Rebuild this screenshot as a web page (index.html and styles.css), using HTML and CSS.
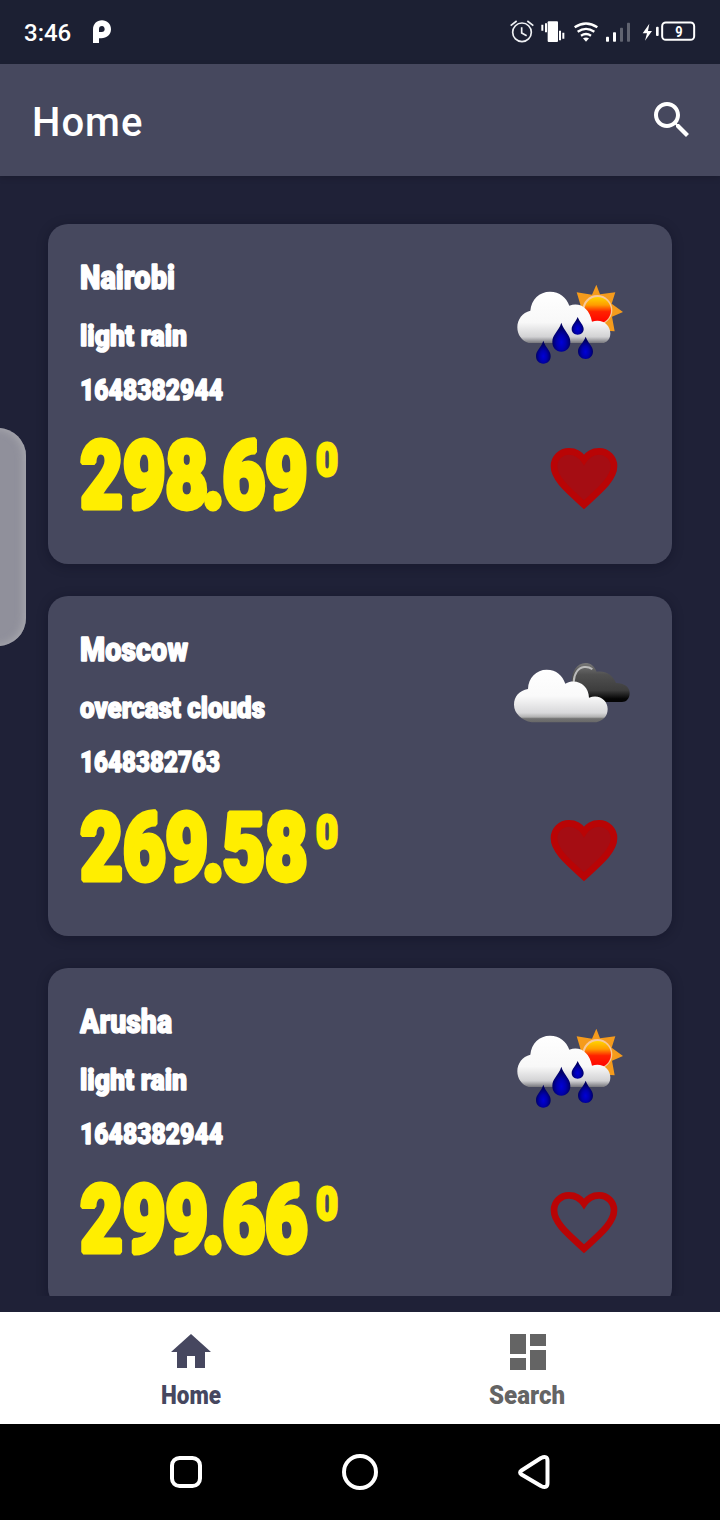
FILE: index.html
```html
<!DOCTYPE html>
<html lang="en">
<head>
<meta charset="utf-8">
<title>Home</title>
<link rel="stylesheet" href="styles.css">
</head>
<body>
<svg class="defs" aria-hidden="true">
  <defs>
    <linearGradient id="cloud" x1="0" y1="0" x2="0" y2="1">
      <stop offset="0" stop-color="#fff"/><stop offset=".5" stop-color="#fafafa"/>
      <stop offset=".82" stop-color="#d8d8da"/><stop offset=".9" stop-color="#b0b0b0"/><stop offset=".93" stop-color="#737373"/><stop offset="1" stop-color="#686868"/>
    </linearGradient>
    <linearGradient id="rainCloud" x1="0" y1="0" x2="0" y2="1">
      <stop offset="0" stop-color="#fff"/><stop offset=".6" stop-color="#f8f8f8"/>
      <stop offset=".88" stop-color="#d2d2d4"/><stop offset="1" stop-color="#77777d"/>
    </linearGradient>
    <linearGradient id="dark" x1="0" y1="0" x2="0" y2="1">
      <stop offset="0" stop-color="#777"/><stop offset=".3" stop-color="#505050"/>
      <stop offset=".7" stop-color="#3d3d3d"/><stop offset=".92" stop-color="#050505"/>
    </linearGradient>
    <linearGradient id="sun" x1="0" y1="0" x2="0" y2="1">
      <stop offset="0" stop-color="#ffd500"/><stop offset=".3" stop-color="#ff9c00"/><stop offset=".55" stop-color="#ff2200"/><stop offset="1" stop-color="#f00"/>
    </linearGradient>
    <radialGradient id="drop" cx=".5" cy=".68" r=".5">
      <stop offset="0" stop-color="#0000d8"/><stop offset=".5" stop-color="#0000ae"/><stop offset="1" stop-color="#000064"/>
    </radialGradient>
    <symbol id="rain" viewBox="42 -12 408 546">
      <path fill="#f59b1c" d="M319 74l11 29 46-6-11 34 34 25-33 14 8 44-60-4-38-60-16-53 46 7z"/>
      <circle cx="322" cy="150" r="45" fill="#f8c89a"/>
      <circle cx="323" cy="151" r="40" fill="url(#sun)"/>
      <path fill="url(#rainCloud)" d="M116 249C95 243 82 224 82 202c0-24 15-44 39-50 3-34 27-57 59-57 29 0 49 17 58 42 30-12 60 6 68 48 30-10 55 9 55 35 0 17-9 25-19 29z"/>
      <g fill="url(#drop)">
        <path d="M160 242c7 22 22 29 22 46 0 14-9 23-22 23s-22-9-22-23c0-17 15-24 22-46z"/>
        <path d="M214 188c9 28 27 34 27 58 0 17-11 29-27 29s-27-12-27-29c0-24 18-30 27-58z"/>
        <path d="M263 171c6 15 18 24 18 36 0 10-7 17-18 17s-18-7-18-17c0-12 12-21 18-36z"/>
        <path d="M287 230c7 20 22 28 22 44 0 14-9 23-22 23s-23-9-23-23c0-16 16-24 23-44z"/>
      </g>
    </symbol>
    <symbol id="clouds" viewBox="42 -36 408 546">
      <path fill="url(#dark)" d="M245 125c0-31 16-56 41-56 15 0 26 7 34 26 26-4 48 9 58 34 25 1 41 12 41 30 0 17-10 27-23 27h-95z"/>
      <path d="M251 126c1-26 14-43 31-45 15-2 20 3 25 7" fill="none" stroke="#bbb" stroke-width="6"/>
      <path fill="url(#cloud)" d="M125 247c-30-6-53-27-53-53 0-24 16-43 42-47 1-34 25-58 56-58 30 0 47 17 56 42 34-18 70 5 71 42 31-12 56 8 56 34 0 22-14 35-34 40z"/>
    </symbol>
  </defs>
</svg>
<div class="screen">
  <header class="status">
    <span class="clock">3:46</span>
    <svg class="p-logo" width="18" height="24" viewBox="279 62 54 72"><path fill-rule="evenodd" fill="#fff" d="M279 131V91c0-17 11-28 27-28 15 0 27 11 27 27s-13 27-29 27h-7v14zm18-33h8c6 0 9-3 9-8 0-6-3-10-8-10-6 0-9 4-9 9z"/></svg>
    <div class="indicators">
      <svg width="24" height="24" viewBox="60 61 72 72" fill="none" stroke="#eef0f3" stroke-width="5"><circle cx="96" cy="98" r="28"/><path d="M95 83v17l15 8M62 78l18-14M130 78l-18-14"/></svg>
      <svg width="26" height="24" viewBox="150 61 78 72" fill="#fff"><rect x="173" y="65" width="31" height="62" rx="3"/><path d="M165 71h6v27h-6zM154 75h6v18h-6zM207 93h6v29h-6zM217 99h6v18h-6z"/></svg>
      <svg class="wifi" width="26" height="24" viewBox="249 61 78 72" fill="none" stroke="#fff" stroke-width="7"><path d="M254 83q34-23 68 0M263 96q25-17 50 0M273 108q15-10 30 0"/><path d="M279 116q9-5 18 0l-9 10z" fill="#fff" stroke="none"/></svg>
      <svg class="signal" width="26" height="24" viewBox="345 61 78 72" fill="#fff"><rect x="348" y="111" width="9" height="15" rx="2"/><rect x="369" y="98" width="9" height="28" rx="2"/><rect x="390" y="84" width="9" height="42" rx="2" opacity=".3"/><rect x="411" y="69" width="9" height="57" rx="2" opacity=".3"/></svg>
      <svg class="battery" width="54" height="24" viewBox="456 61 162 72" fill="#fff"><path d="M478 72l-20 29h13l-6 22 21-29h-12z"/><rect x="498" y="81" width="8" height="28" rx="3"/><rect x="516.500" y="68.500" width="96" height="52" rx="11" fill="none" stroke="#fff" stroke-width="6"/><text x="567" y="111" text-anchor="middle" font-size="44" font-weight="700" textLength="22" lengthAdjust="spacingAndGlyphs">9</text></svg>
    </div>
  </header>
  <div class="appbar">
    <h1>Home</h1>
    <svg width="48" height="48" viewBox="0 0 24 24" fill="#fff"><path d="M15.500 14h-.79l-.28-.27C15.410 12.590 16 11.110 16 9.500 16 5.910 13.090 3 9.500 3S3 5.910 3 9.500 5.910 16 9.500 16c1.610 0 3.090-.59 4.230-1.570l.27.28v.79l5 4.990L20.490 19l-4.990-5zm-6 0C7.010 14 5 11.990 5 9.500S7.010 5 9.500 5 14 7.010 14 9.500 11.990 14 9.500 14z"/></svg>
  </div>
  <main class="list">
    <article class="card">
      <div class="info">
        <svg class="name" height="48"><text x="0" y="33" textLength="95" lengthAdjust="spacingAndGlyphs">Nairobi</text></svg>
        <svg class="line" height="54"><text x="0" y="41.500" textLength="107" lengthAdjust="spacingAndGlyphs">light rain</text></svg>
        <svg class="line" height="54"><text x="0" y="41.500" textLength="143" lengthAdjust="spacingAndGlyphs">1648382944</text></svg>
        <div class="temp">
          <svg class="value" height="120"><text transform="scale(.79 1)" x="0 54 108 154.500 180 234" y="96.500">298.69</text></svg>
          <svg class="deg" height="120"><text x="1" y="63.500" textLength="22" lengthAdjust="spacingAndGlyphs">0</text></svg>
        </div>
      </div>
      <div class="side">
        <svg width="136" height="182"><use href="#rain"/></svg>
        <svg class="heart filled" width="80" height="80" viewBox="0 0 24 24"><path d="M12 20C7.500 15.900 3 12.300 3 8.500 3 6 5 4 7.500 4c1.700 0 3.400.9 4.500 2.500C13.100 4.900 14.800 4 16.500 4 19 4 21 6 21 8.500c0 3.800-4.500 7.400-9 11.500z"/></svg>
      </div>
    </article>
    <article class="card">
      <div class="info">
        <svg class="name" height="48"><text x="0" y="33" textLength="108" lengthAdjust="spacingAndGlyphs">Moscow</text></svg>
        <svg class="line" height="54"><text x="0" y="41.500" textLength="185" lengthAdjust="spacingAndGlyphs">overcast clouds</text></svg>
        <svg class="line" height="54"><text x="0" y="41.500" textLength="140" lengthAdjust="spacingAndGlyphs">1648382763</text></svg>
        <div class="temp">
          <svg class="value" height="120"><text transform="scale(.79 1)" x="0 54 108 154.500 180 234" y="96.500">269.58</text></svg>
          <svg class="deg" height="120"><text x="1" y="63.500" textLength="22" lengthAdjust="spacingAndGlyphs">0</text></svg>
        </div>
      </div>
      <div class="side">
        <svg width="136" height="182"><use href="#clouds"/></svg>
        <svg class="heart filled" width="80" height="80" viewBox="0 0 24 24"><path d="M12 20C7.500 15.900 3 12.300 3 8.500 3 6 5 4 7.500 4c1.700 0 3.400.9 4.500 2.500C13.100 4.900 14.800 4 16.500 4 19 4 21 6 21 8.500c0 3.800-4.500 7.400-9 11.500z"/></svg>
      </div>
    </article>
    <article class="card">
      <div class="info">
        <svg class="name" height="48"><text x="0" y="33" textLength="92" lengthAdjust="spacingAndGlyphs">Arusha</text></svg>
        <svg class="line" height="54"><text x="0" y="41.500" textLength="107" lengthAdjust="spacingAndGlyphs">light rain</text></svg>
        <svg class="line" height="54"><text x="0" y="41.500" textLength="143" lengthAdjust="spacingAndGlyphs">1648382944</text></svg>
        <div class="temp">
          <svg class="value" height="120"><text transform="scale(.79 1)" x="0 54 108 154.500 180 234" y="96.500">299.66</text></svg>
          <svg class="deg" height="120"><text x="1" y="63.500" textLength="22" lengthAdjust="spacingAndGlyphs">0</text></svg>
        </div>
      </div>
      <div class="side">
        <svg width="136" height="182"><use href="#rain"/></svg>
        <svg class="heart" width="80" height="80" viewBox="0 0 24 24"><path d="M12 20C7.500 15.900 3 12.300 3 8.500 3 6 5 4 7.500 4c1.700 0 3.400.9 4.500 2.500C13.100 4.900 14.800 4 16.500 4 19 4 21 6 21 8.500c0 3.800-4.500 7.400-9 11.500z"/></svg>
      </div>
    </article>
  </main>
  <nav class="tabs">
    <div class="tab active">
      <svg width="48" height="48" viewBox="0 0 24 24"><path d="M10 20v-6h4v6h5v-8h3L12 3 2 12h3v8z"/></svg>
      <svg class="label" width="84" height="36"><text x="12" y="24" textLength="60" lengthAdjust="spacingAndGlyphs">Home</text></svg>
    </div>
    <div class="tab">
      <svg width="48" height="48" viewBox="0 0 24 24"><path d="M3 13h8V3H3v10zm0 8h8v-6H3v6zm10 0h8V11h-8v10zm0-18v6h8V3h-8z"/></svg>
      <svg class="label" width="84" height="36"><text x="3" y="24" textLength="76" lengthAdjust="spacingAndGlyphs">Search</text></svg>
    </div>
  </nav>
  <footer class="system">
    <svg width="36" height="36"><rect x="4" y="4" width="28" height="28" rx="7.500"/></svg>
    <svg width="36" height="36"><circle cx="18" cy="18" r="16"/></svg>
    <svg width="36" height="36"><path d="M5.500 16.500L25 4Q31.500 1 31.500 7V29Q31.500 35 25 32L5.500 20.500Q2.700 18.500 5.500 16.500z"/></svg>
  </footer>
  <div class="edge-handle"></div>
</div>
</body>
</html>
```
FILE: styles.css
```css
* { box-sizing: border-box; }
body { margin: 0; background: #1f2037; font-family: Roboto, sans-serif; }
svg { display: block; flex: none; }
.defs { position: absolute; width: 0; height: 0; }
.screen { position: relative; width: 720px; height: 1520px; display: flex; flex-direction: column; overflow: hidden; background: #1f2137; }
.status { height: 64px; flex: none; display: flex; align-items: center; padding: 0 24px; background: #1c2033; color: #fff; }
.clock { font-size: 24px; font-weight: 500; line-height: 28px; padding-top: 2px; }
.p-logo { margin-left: 22px; }
.indicators { margin-left: auto; display: flex; gap: 6px; }
.wifi { margin-left: 1px; }
.battery { margin-left: 5px; }
.appbar { height: 112px; flex: none; display: flex; align-items: center; justify-content: space-between; padding: 0 24px 0 32px; background: #46485e; color: #fff; box-shadow: 0 2px 6px rgba(0, 0, 0, .15); }
.appbar h1 { margin: 6px 0 0; font-size: 40px; font-weight: 500; letter-spacing: 1px; line-height: 48px; }
.list { height: 1120px; flex: none; overflow: hidden; padding: 48px 48px 0; display: flex; flex-direction: column; gap: 32px; }
.card { height: 340px; flex: none; padding: 32px; border-radius: 20px; background: #46485e; display: flex; justify-content: space-between; box-shadow: 0 2px 12px rgba(8, 8, 22, .3); }
.info svg { overflow: visible; }
.name, .line { width: 300px; }
.info text { fill: #fff; stroke: #fff; stroke-width: 1.500px; stroke-linejoin: bevel; font-weight: 900; }
.name text { font-size: 34px; }
.line text { font-size: 29.500px; }
.temp { display: flex; }
.value { width: 235px; }
.value text { font-size: 94px; fill: #fe0; stroke: #fe0; stroke-width: 5px; }
.deg { width: 25px; }
.deg text { font-size: 46px; fill: #fe0; stroke: #fe0; stroke-width: 3px; }
.side { display: flex; flex-direction: column; }
.heart { align-self: flex-end; margin-right: 16px; }
.heart path { fill: none; stroke: #b90405; stroke-width: 2; }
.heart.filled path { fill: #a50d13; }
.tabs { height: 112px; flex: none; margin-top: 16px; padding: 16px 24px 8px 22px; display: flex; background: #fff; }
.tab { flex: 1; display: flex; flex-direction: column; align-items: center; color: #646464; fill: currentColor; }
.tab.active { color: #46475f; }
.label { margin-top: 4px; overflow: visible; }
.label text { font-size: 26px; font-weight: 900; }
.system { height: 96px; flex: none; background: #000; display: flex; align-items: center; justify-content: space-between; padding: 0 168px; }
.system svg { fill: none; stroke: #fff; stroke-width: 4; stroke-linejoin: round; }
.edge-handle { position: absolute; left: -30px; top: 428px; width: 56px; height: 218px; border-radius: 30px; background: #90909b; box-shadow: inset -2px 0 8px #aaaab0; }
```
